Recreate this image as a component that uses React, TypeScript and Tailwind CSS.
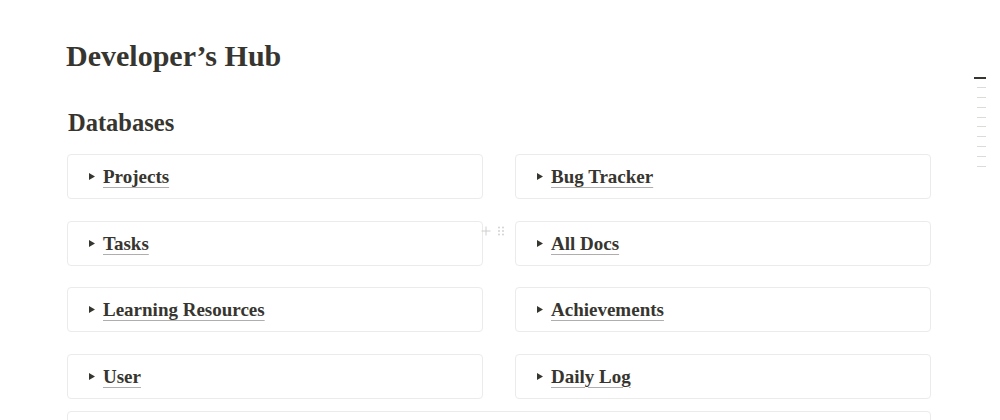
import React from "react";

const serif = { fontFamily: '"Liberation Serif", "Times New Roman", serif' };

function Caret() {
  return (
    <svg width="8" height="9" viewBox="0 0 8 9" className="shrink-0">
      <path d="M1 1 L7 4.5 L1 8 Z" fill="#37352f" />
    </svg>
  );
}

function Card({ label }: { label: string }) {
  return (
    <div className="h-[45px] border border-[#ebebea] rounded-[4px] flex items-center pl-[20px] gap-[7px]">
      <Caret />
      <span className="text-[19px] font-bold text-[#37352f] underline decoration-[rgba(55,53,47,0.4)] decoration-[1px] underline-offset-[4px] leading-none">
        {label}
      </span>
    </div>
  );
}

export default function App() {
  const items = [
    "Projects",
    "Bug Tracker",
    "Tasks",
    "All Docs",
    "Learning Resources",
    "Achievements",
    "User",
    "Daily Log",
  ];
  return (
    <div className="relative w-[1000px] h-[420px] overflow-hidden bg-white" style={serif}>
      <div className="pl-[67px] w-[931px] pt-[37px]">
        <h1 className="text-[30px] font-bold text-[#37352f] leading-[38px] ml-[-1px]">Developer’s Hub</h1>
        <h2 className="mt-[33px] text-[24.5px] font-bold text-[#37352f] leading-[30px] ml-[1px]">Databases</h2>
        <div className="relative mt-[16px] grid grid-cols-2 gap-x-[32px] gap-y-[21.5px]">
          {items.map((l) => (
            <Card key={l} label={l} />
          ))}
          <div className="absolute left-[414px] top-[72px] flex items-center gap-[7px]">
            <svg width="10" height="10" viewBox="0 0 10 10">
              <path d="M5 0.5 V9.5 M0.5 5 H9.5" stroke="#cfcecb" strokeWidth="1" />
            </svg>
            <svg width="6" height="10" viewBox="0 0 6 10">
              {[0, 1, 2].map((r) =>
                [0, 1].map((c) => (
                  <circle key={`${r}-${c}`} cx={1 + c * 4} cy={1.5 + r * 3.5} r="0.9" fill="#cfcecb" />
                ))
              )}
            </svg>
          </div>
        </div>
        <div className="mt-[12px] h-[45px] border border-[#ebebea] rounded-[4px]" />
      </div>
      <div className="absolute left-[974px] top-[77px] flex flex-col items-end gap-[8.8px] w-[12px]">
        <div className="w-[12px] h-[1.5px] bg-[#37352f]" />
        {Array.from({ length: 9 }).map((_, i) => (
          <div key={i} className="w-[9px] h-[1px] bg-[#dcdbd8]" />
        ))}
      </div>
    </div>
  );
}
